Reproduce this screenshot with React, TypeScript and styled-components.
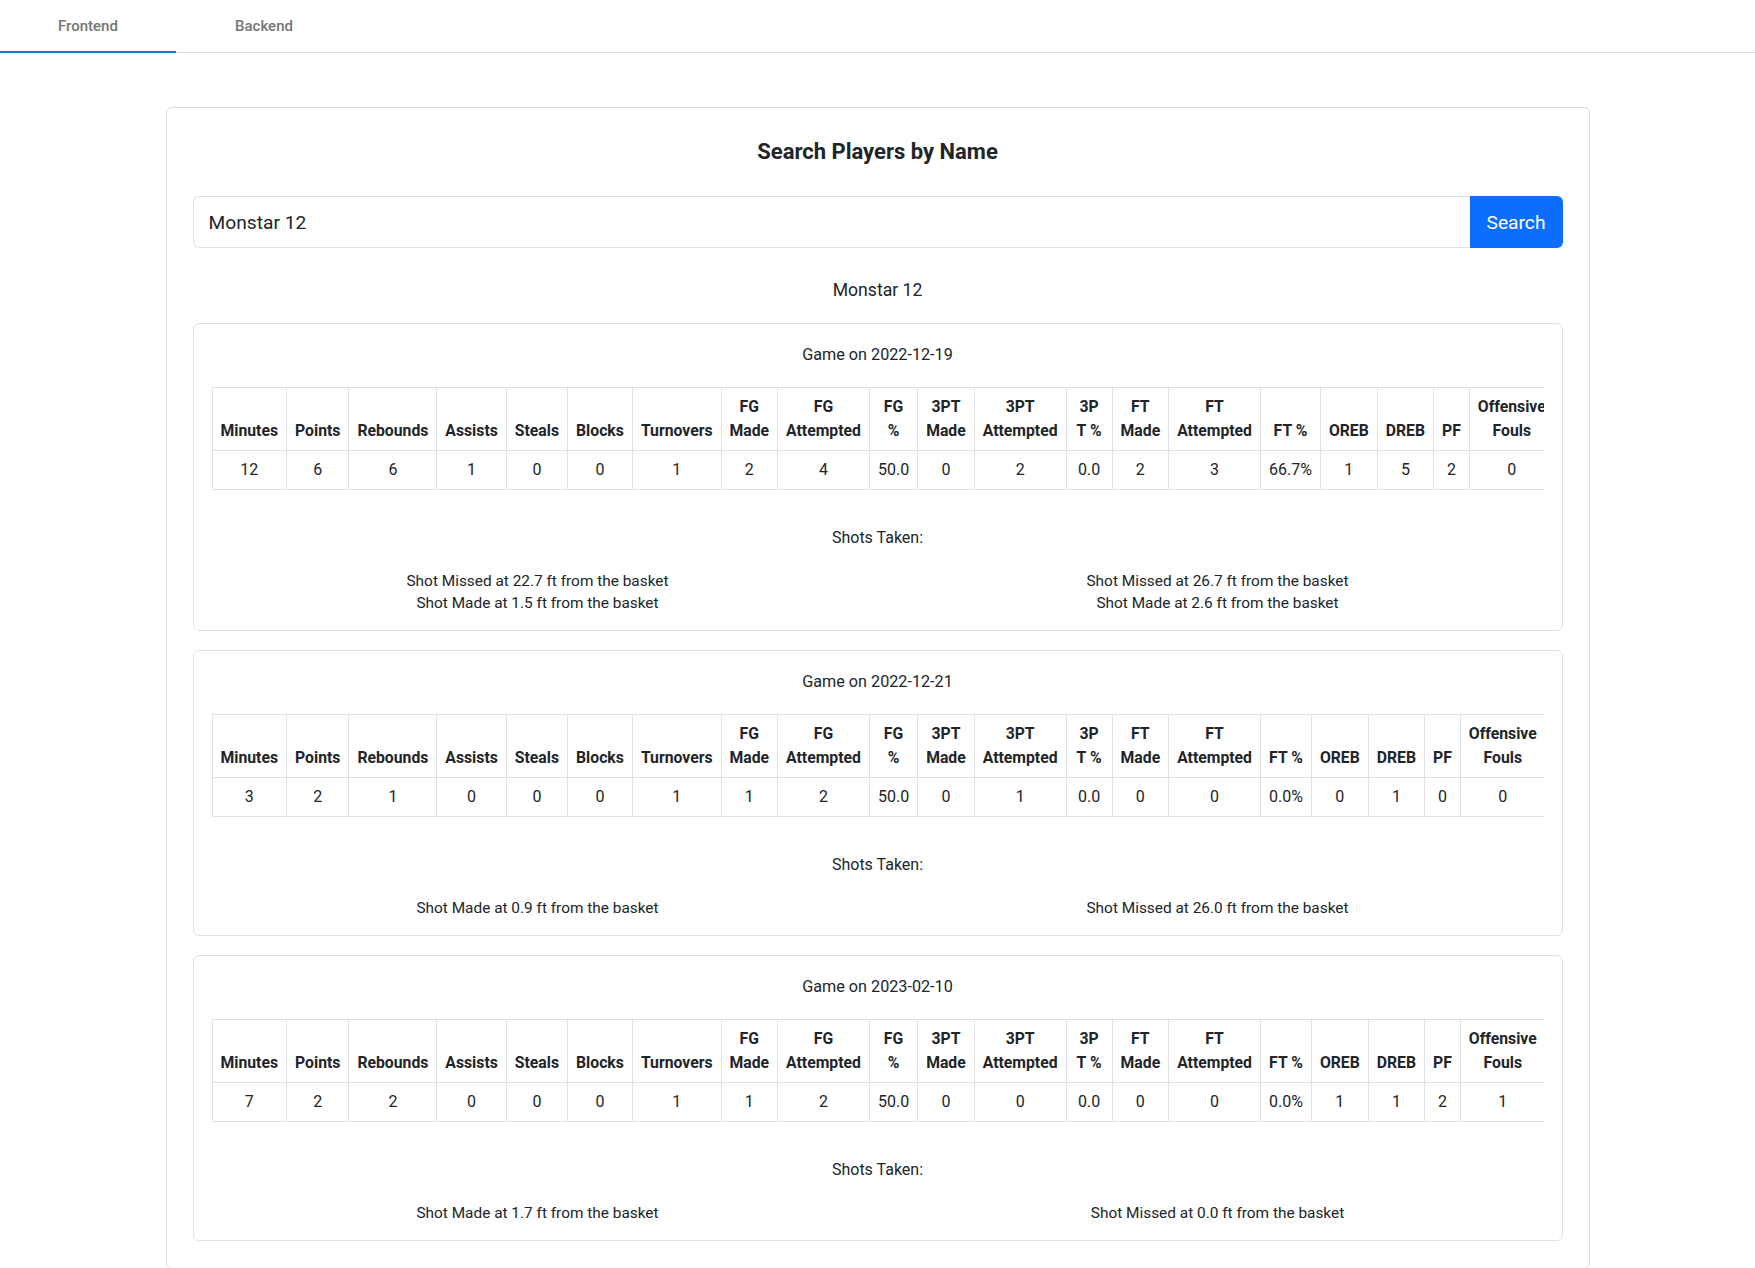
import React from "react";
import styled, { createGlobalStyle } from "styled-components";

const GlobalStyle = createGlobalStyle`
  *, *::before, *::after { box-sizing: border-box; }
  html, body { margin: 0; padding: 0; background: #ffffff; overflow: hidden; }
  body {
    font-family: Roboto, "Liberation Sans", Arial, sans-serif;
    color: #212529;
  }
`;

const TabBar = styled.nav`
  display: flex;
  border-bottom: 1px solid #e0e0e0;
`;

const Tab = styled.button<{ $active?: boolean }>`
  width: 176px;
  height: 53px;
  margin-bottom: -1px;
  padding: 0;
  background: none;
  border: none;
  border-bottom: 2px solid ${(p) => (p.$active ? "#1976d2" : "transparent")};
  font-family: Roboto, "Liberation Sans", Arial, sans-serif;
  font-size: 15px;
  font-weight: 500;
  color: #757575;
  cursor: pointer;
`;

const Main = styled.main`
  padding-top: 54px;
`;

const SearchCard = styled.section`
  width: 1424px;
  margin: 0 auto;
  border: 1px solid #dcdcdc;
  border-radius: 6px;
  padding: 31px 26px 27px;
`;

const Title = styled.h2`
  margin: 0 0 31px;
  font-size: 22px;
  line-height: 26px;
  font-weight: 700;
  text-align: center;
`;

const SearchRow = styled.form`
  display: flex;
  margin: 0 0 29px;
`;

const SearchInput = styled.input`
  flex: 1;
  height: 52px;
  padding: 0 15px;
  font-family: Roboto, "Liberation Sans", Arial, sans-serif;
  font-size: 19.2px;
  color: #212529;
  border: 1px solid #dee2e6;
  border-right: none;
  border-radius: 6px 0 0 6px;
  outline: none;
`;

const SearchButton = styled.button`
  width: 93px;
  height: 52px;
  padding: 0;
  border: none;
  border-radius: 0 6px 6px 0;
  background: #0d6efd;
  color: #ffffff;
  font-family: Roboto, "Liberation Sans", Arial, sans-serif;
  font-size: 19.2px;
  cursor: pointer;
`;

const PlayerName = styled.div`
  margin: 0 0 20px;
  font-size: 17.6px;
  line-height: 26.4px;
  text-align: center;
`;

const GameList = styled.div`
  display: flex;
  flex-direction: column;
  gap: 19px;
`;

const GameCard = styled.article`
  border: 1px solid #dee2e6;
  border-radius: 6px;
  padding: 19px 18px 16px;
`;

const GameTitle = styled.div`
  margin-bottom: 20px;
  font-size: 16.2px;
  line-height: 24px;
  text-align: center;
`;

const TableWrap = styled.div`
  overflow: hidden;
`;

const StatTable = styled.table`
  width: 100%;
  border-collapse: collapse;
  font-size: 16px;
  line-height: 24px;
`;

const HeadCell = styled.th`
  border: 1px solid #dee2e6;
  padding: 7px 8px;
  font-size: 15.75px;
  font-weight: 700;
  text-align: center;
  vertical-align: bottom;
`;

const HeadLabel = styled.span<{ $minWidth?: number }>`
  display: inline-block;
  min-width: ${(p) => (p.$minWidth ? `${p.$minWidth}px` : "0")};
`;

const DataCell = styled.td`
  border: 1px solid #dee2e6;
  padding: 7px 8px;
  text-align: center;
  vertical-align: middle;
`;

const ShotsTitle = styled.div`
  margin-top: 36px;
  font-size: 16px;
  line-height: 24px;
  text-align: center;
`;

const ShotGrid = styled.div`
  display: grid;
  grid-template-columns: 1fr 1fr;
  margin: 20px -14px 0;
`;

const ShotColumn = styled.div`
  display: flex;
  flex-direction: column;
  text-align: center;
  font-size: 15.4px;
  line-height: 22px;
`;

const headers: { label: string; minWidth?: number }[] = [
  { label: "Minutes" },
  { label: "Points" },
  { label: "Rebounds" },
  { label: "Assists" },
  { label: "Steals" },
  { label: "Blocks" },
  { label: "Turnovers" },
  { label: "FG Made" },
  { label: "FG Attempted" },
  { label: "FG %" },
  { label: "3PT Made" },
  { label: "3PT Attempted" },
  { label: "3P T\u00a0%", minWidth: 29 },
  { label: "FT Made" },
  { label: "FT Attempted" },
  { label: "FT %" },
  { label: "OREB" },
  { label: "DREB" },
  { label: "PF" },
  { label: "Offensive Fouls" },
];

type Game = {
  date: string;
  stats: string[];
  shots: [string[], string[]];
};

const games: Game[] = [
  {
    date: "2022-12-19",
    stats: ["12", "6", "6", "1", "0", "0", "1", "2", "4", "50.0", "0", "2", "0.0", "2", "3", "66.7%", "1", "5", "2", "0"],
    shots: [
      ["Shot Missed at 22.7 ft from the basket", "Shot Made at 1.5 ft from the basket"],
      ["Shot Missed at 26.7 ft from the basket", "Shot Made at 2.6 ft from the basket"],
    ],
  },
  {
    date: "2022-12-21",
    stats: ["3", "2", "1", "0", "0", "0", "1", "1", "2", "50.0", "0", "1", "0.0", "0", "0", "0.0%", "0", "1", "0", "0"],
    shots: [["Shot Made at 0.9 ft from the basket"], ["Shot Missed at 26.0 ft from the basket"]],
  },
  {
    date: "2023-02-10",
    stats: ["7", "2", "2", "0", "0", "0", "1", "1", "2", "50.0", "0", "0", "0.0", "0", "0", "0.0%", "1", "1", "2", "1"],
    shots: [["Shot Made at 1.7 ft from the basket"], ["Shot Missed at 0.0 ft from the basket"]],
  },
];

function GameBlock({ game }: { game: Game }) {
  return (
    <GameCard>
      <GameTitle>Game on {game.date}</GameTitle>
      <TableWrap>
        <StatTable>
          <thead>
            <tr>
              {headers.map((h) => (
                <HeadCell key={h.label}>
                  <HeadLabel $minWidth={h.minWidth}>{h.label}</HeadLabel>
                </HeadCell>
              ))}
            </tr>
          </thead>
          <tbody>
            <tr>
              {game.stats.map((v, i) => (
                <DataCell key={i}>{v}</DataCell>
              ))}
            </tr>
          </tbody>
        </StatTable>
      </TableWrap>
      <ShotsTitle>Shots Taken:</ShotsTitle>
      <ShotGrid>
        {game.shots.map((col, i) => (
          <ShotColumn key={i}>
            {col.map((s) => (
              <div key={s}>{s}</div>
            ))}
          </ShotColumn>
        ))}
      </ShotGrid>
    </GameCard>
  );
}

export default function App() {
  return (
    <>
      <GlobalStyle />
      <TabBar>
        <Tab $active>Frontend</Tab>
        <Tab>Backend</Tab>
      </TabBar>
      <Main>
        <SearchCard>
          <Title>Search Players by Name</Title>
          <SearchRow onSubmit={(e) => e.preventDefault()}>
            <SearchInput defaultValue="Monstar 12" />
            <SearchButton type="submit">Search</SearchButton>
          </SearchRow>
          <PlayerName>Monstar 12</PlayerName>
          <GameList>
            {games.map((g) => (
              <GameBlock key={g.date} game={g} />
            ))}
          </GameList>
        </SearchCard>
      </Main>
    </>
  );
}
